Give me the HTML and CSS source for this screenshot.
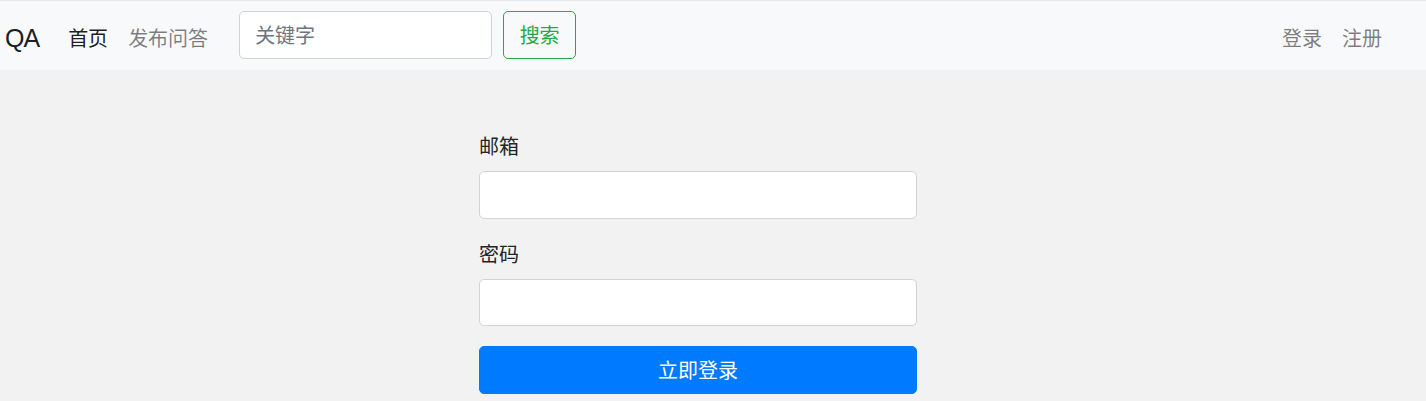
FILE: index.html
```html
<!DOCTYPE html>
<html lang="zh-CN">
<head>
<meta charset="utf-8">
<title>QA - 登录</title>
<link rel="stylesheet" href="styles.css">
</head>
<body>
<nav class="navbar">
  <a class="brand" href="#">QA</a>
  <ul class="nav-links">
    <li><a class="nav-link active" href="#">首页</a></li>
    <li><a class="nav-link" href="#">发布问答</a></li>
  </ul>
  <form class="search-form">
    <input class="search-input" type="text" placeholder="关键字">
    <button class="search-btn" type="button">搜索</button>
  </form>
  <ul class="nav-links nav-right">
    <li><a class="nav-link" href="#">登录</a></li>
    <li><a class="nav-link" href="#">注册</a></li>
  </ul>
</nav>
<main class="main">
  <form class="login-form">
    <div class="form-group">
      <label class="form-label">邮箱</label>
      <input class="form-control" type="email">
    </div>
    <div class="form-group">
      <label class="form-label">密码</label>
      <input class="form-control" type="password">
    </div>
    <button class="submit-btn" type="button">立即登录</button>
  </form>
</main>
</body>
</html>
```
FILE: styles.css
```css
* { box-sizing: border-box; }
html, body {
  margin: 0;
  padding: 0;
}
body {
  font-family: "Liberation Sans", "Noto Sans CJK SC", sans-serif;
  font-size: 20px;
  line-height: 1.5;
  color: #212529;
  background: #f2f2f2;
  min-height: 401px;
}
.navbar {
  display: flex;
  align-items: center;
  height: 70px;
  background: #f8f9fa;
  border-top: 1px solid #e4e6e9;
  padding: 0 34px 0 5px;
}
.brand {
  font-size: 25px;
  line-height: 1;
  color: rgba(0,0,0,.9);
  text-decoration: none;
  margin-right: 19px;
  padding-top: 6px;
  letter-spacing: -1px;
}
.nav-links {
  display: flex;
  list-style: none;
  margin: 4px 0 0;
  padding: 0;
}
.nav-link {
  display: block;
  padding: 0 10px;
  color: rgba(0,0,0,.5);
  text-decoration: none;
  font-family: "Noto Sans CJK SC", sans-serif;
  line-height: 30px;
}
.nav-link.active { color: rgba(0,0,0,.9); }
.search-form {
  display: flex;
  align-self: flex-start;
  margin: 10px 0 0 21px;
}
.search-input {
  width: 253px;
  height: 47.5px;
  padding: 0 15px;
  border: 1px solid #ced4da;
  border-radius: 5px;
  background: #fff;
  font: 20px "Noto Sans CJK SC", sans-serif;
  color: #495057;
  outline: none;
}
.search-input::placeholder { color: #6c757d; }
.search-btn {
  margin-left: 11px;
  height: 47.5px;
  width: 73px;
  padding: 0;
  border: 1px solid #28a745;
  border-radius: 5px;
  background: transparent;
  color: #28a745;
  font: 20px "Noto Sans CJK SC", sans-serif;
}
.nav-right { margin-left: auto; }
.main {
  padding: 61px 0 8px 479px;
}
.login-form { width: 438px; }
.form-group { margin-bottom: 20px; }
.form-label {
  display: block;
  margin-bottom: 10px;
  line-height: 30px;
  font-family: "Noto Sans CJK SC", sans-serif;
  color: #212529;
}
.form-control {
  display: block;
  width: 100%;
  height: 47.5px;
  border: 1px solid #ced4da;
  border-radius: 5px;
  background: #fff;
  outline: none;
}
.submit-btn {
  display: block;
  width: 100%;
  height: 47.5px;
  border: 1px solid #007bff;
  border-radius: 5px;
  background: #007bff;
  color: #fff;
  font: 20px "Noto Sans CJK SC", sans-serif;
  padding: 0;
}
```
